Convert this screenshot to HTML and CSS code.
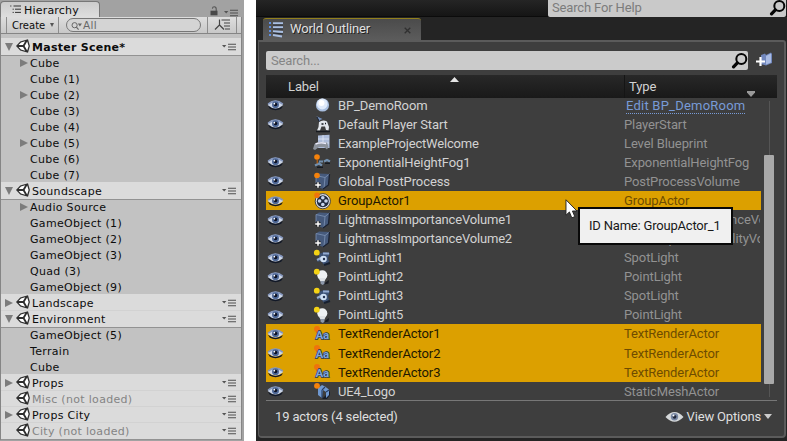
FILE: index.html
```html
<!DOCTYPE html>
<html lang="en">
<head>
<meta charset="utf-8">
<title>Scene hierarchy and world outliner</title>
<link rel="stylesheet" href="styles.css">
</head>
<body>
<svg class="defs" aria-hidden="true">
  <symbol id="unity" viewBox="0 0 14 14"><path d="M0 7 4.2 2.4 12 .2 13.9 7 12 13.8 4.2 11.6Z" fill="#2e2e2e"/><path d="M5 3.6 9.2 2.3 7 6.1H2.6ZM2.6 7.9H7L9.2 11.7 5 10.4ZM8.6 7 11.2 2.6 12.6 7 11.2 11.4Z" fill="#fff"/></symbol>
  <symbol id="menu" viewBox="0 0 14 8"><path d="M0 2H4.4L2.2 4.6Z" fill="#555"/><path d="M6 1.2h8M6 4h8M6 6.8h8" stroke="#505050" stroke-width="1.1"/></symbol>
  <symbol id="eye" viewBox="0 0 18 12"><path d="M1 6.8Q8 12.6 17 7.4L15 10Q9 13 3 10Z" fill="#111827"/><path d="M.7 6Q8.5-2.8 17.2 6 9 13.2.7 6Z" fill="#ccd6e8"/><path d="M1.2 5Q8.8-1.2 16.8 5" fill="none" stroke="#8496bd" stroke-width="1.8"/><circle cx="9" cy="5.8" r="3.7" fill="#4d6796"/><circle cx="9" cy="5.5" r="1.9" fill="#0b1022"/><circle cx="7.8" cy="4.6" r=".9" fill="#fff"/></symbol>
  <symbol id="glass" viewBox="0 0 16 16"><circle cx="9.7" cy="6.6" r="4.7" fill="none" stroke="#050505" stroke-width="1.9"/><path d="M6 10.2 2.4 14" stroke="#050505" stroke-width="3" stroke-linecap="round"/></symbol>
  <symbol id="sphere" viewBox="0 0 18 18"><circle cx="9.5" cy="9" r="6.6" fill="#a9bfdf"/><circle cx="9.2" cy="8" r="5.4" fill="#dfeafa"/><circle cx="8.5" cy="7" r="3" fill="#fff"/></symbol>
  <symbol id="player" viewBox="0 0 18 18"><path d="M3.5 1.2 9.5 4 7 5 6.6 7Z" fill="#7490bd"/><path d="M4 2 7 8" stroke="#161d2b"/><path d="M6 7Q10 4.2 14 6.5L16 12 15.5 15.5 13 15 12 11.5 8.5 11.5 7 15.5 4 15.5 5.5 12Z" fill="#e1e5ea"/><path d="M3 16.5h14M8.5 9h2M12 8.5h1" stroke="#16191f" stroke-width="1.5"/></symbol>
  <symbol id="level" viewBox="0 0 18 18"><path d="M5 1.5 16.5.7V14H5Z" fill="#aebddb"/><path d="M5 5h11M5 9h11M10 1v12" stroke="#e6edf8" stroke-width=".7"/><path d="M1.5 10Q5 7 9 8.5L14 8.5 15.5 13 14 15.5 11 13H6L2 16 0 15Z" fill="#8d939d"/><path d="M2.5 10.2Q7 8 13 9.5" stroke="#eef" fill="none" stroke-width="1.4"/></symbol>
  <symbol id="fog" viewBox="0 0 18 18"><path d="M2 12.5 6 10.5 9 12.5M6 8.5h4M11 8.5 14 7 17 8.5" stroke="#718fae" stroke-width="2.2" fill="none"/><path d="M4 14.3h6M12 10.3h5" stroke="#161b22" stroke-width="1.4"/><circle cx="4" cy="4" r="2.8" fill="#f5820b"/><path d="M4.2 6.5v4" stroke="#d66a09"/></symbol>
  <symbol id="cube" viewBox="0 0 18 18"><path d="M3 3.5 6 1.5 16.5 2 15.5 13 10 17 3 14Z" fill="#465a7c"/><path d="M3 3.5 12 5.5 16.5 2M12 5.5 11 16M3 3.5V12" fill="none" stroke="#7e93b5" stroke-width=".8"/><path d="M16.5 2 15.5 13 10 17" fill="none" stroke="#1b2232" stroke-width="1.3"/><path d="M5 10v6M2 13h6" stroke="#222" stroke-width="3"/><path d="M5 10.2v5.6M2.2 13h5.6" stroke="#fff" stroke-width="1.5"/></symbol>
  <symbol id="post" viewBox="0 0 18 18"><use href="#cube"/><circle cx="4" cy="3.5" r="2.8" fill="#f5820b"/></symbol>
  <symbol id="group" viewBox="0 0 18 18"><circle cx="9.8" cy="9.2" r="7.6" fill="#e2e5ea" stroke="#33363d" stroke-width=".9"/><circle cx="9.8" cy="9.2" r="6" fill="#202a3e"/><g fill="#c8d6ef"><circle cx="9.8" cy="5.8" r="1.8"/><circle cx="6.6" cy="9" r="1.8"/><circle cx="13" cy="9" r="1.8"/><circle cx="9.8" cy="12.5" r="1.8"/></g><circle cx="4" cy="3.2" r="2.8" fill="#ef740b"/></symbol>
  <symbol id="spot" viewBox="0 0 18 18"><path d="M6 5 11 3 17 4 15 9 16 13 11 16 8 12 4 13 6 10Z" fill="#3c5276"/><path d="M10 4.5 16 4.5M4 11 8 9" stroke="#93aacf" stroke-width="2"/><circle cx="10.5" cy="10" r="3.3" fill="#cfe0f4"/><circle cx="11" cy="10" r="1.2" fill="#233250"/><path d="M11 16 17 14" stroke="#17202f" stroke-width="2"/><circle cx="3.8" cy="3.7" r="2.9" fill="#f5d315"/></symbol>
  <symbol id="bulb" viewBox="0 0 18 18"><path d="M9 17 16 12 15.5 15.5Z" fill="#181b22"/><circle cx="9.3" cy="7.2" r="5" fill="#eef1f3"/><path d="M5.6 10h7.4L11.5 13.5h-4Z" fill="#dfe3e7"/><path d="M7.6 13h3.8v3L9.7 17 7.6 15.8Z" fill="#8d98aa"/><circle cx="3.8" cy="3.7" r="2.9" fill="#f5d315"/></symbol>
  <symbol id="text" viewBox="0 0 18 18"><circle cx="4" cy="4" r="3" fill="#ef740b"/><path d="M4 6.5v2" stroke="#b85a08"/><text x="2.6" y="14.2" class="aa">Aa</text></symbol>
  <symbol id="mesh" viewBox="0 0 18 18"><path d="M9 17 14 17 17 13V9Z" fill="#171d29"/><path d="M5 6 9 3 12 4.5 16 7.5V13L13 16V10L10 8 9 16 5 13Z" fill="#6f98d0"/><path d="M9 8 12 5M9 8V16M13 10 16 8" stroke="#263d63" stroke-width="1.1"/><circle cx="4" cy="3.8" r="2.9" fill="#f5820b"/></symbol>
</svg>
<div class="desktop">
  <section class="hierarchy">
    <div class="h-tabs">
      <div class="h-tab"><svg width="11" height="9" viewBox="0 0 11 9"><path d="M3.5 1H11M5 4.2h6M5 7.4h6" stroke="#333"/><path d="M0 1h1.5M2.5 4.2H4M2.5 7.4H4" stroke="#555"/></svg>Hierarchy</div>
      <div class="h-tools"><svg width="8" height="10" viewBox="0 0 8 10"><path d="M2.4 2.6Q2.6.8 4.2.8 6.2.8 6.2 3V5" fill="none" stroke="#555" stroke-width="1.1"/><path d="M.5 4.7h7V9.3h-7Z" fill="#484848"/></svg><svg width="14" height="8"><use href="#menu"/></svg></div>
    </div>
    <div class="h-bar">
      <div class="create">Create<i></i></div>
      <div class="h-search"><svg width="12" height="10" viewBox="0 0 12 10"><circle cx="3.6" cy="4.2" r="2.6" fill="none" stroke="#666"/><path d="M5.4 6.2 7.6 8.7" stroke="#666" stroke-width="1.2"/><path d="M6.8 2.5H11L8.9 5.4Z" fill="#666"/></svg>All</div>
      <div class="sort"><svg width="17" height="12" viewBox="0 0 17 12"><path d="M5.5.5V6L1 10.5M5.5 6 10 10.5M7.5 1H16M10 4h6M10 7h6M11 10h5" stroke="#444" stroke-width="1.2" fill="none"/></svg></div>
    </div>
    <div class="tree">
      <div class="scene main"><i class="dn"></i><svg class="u"><use href="#unity"/></svg><span>Master Scene*</span><svg class="m"><use href="#menu"/></svg></div>
      <div class="node"><i class="rt"></i>Cube</div>
      <div class="node"><i></i>Cube (1)</div>
      <div class="node"><i class="rt"></i>Cube (2)</div>
      <div class="node"><i></i>Cube (3)</div>
      <div class="node"><i></i>Cube (4)</div>
      <div class="node"><i class="rt"></i>Cube (5)</div>
      <div class="node"><i></i>Cube (6)</div>
      <div class="node"><i></i>Cube (7)</div>
      <div class="scene"><i class="dn"></i><svg class="u"><use href="#unity"/></svg><span>Soundscape</span><svg class="m"><use href="#menu"/></svg></div>
      <div class="node"><i class="rt"></i>Audio Source</div>
      <div class="node"><i></i>GameObject (1)</div>
      <div class="node"><i></i>GameObject (2)</div>
      <div class="node"><i></i>GameObject (3)</div>
      <div class="node"><i></i>Quad (3)</div>
      <div class="node"><i></i>GameObject (9)</div>
      <div class="scene shut"><i class="rt"></i><svg class="u"><use href="#unity"/></svg><span>Landscape</span><svg class="m"><use href="#menu"/></svg></div>
      <div class="scene"><i class="dn"></i><svg class="u"><use href="#unity"/></svg><span>Environment</span><svg class="m"><use href="#menu"/></svg></div>
      <div class="node"><i></i>GameObject (5)</div>
      <div class="node"><i></i>Terrain</div>
      <div class="node"><i></i>Cube</div>
      <div class="scene shut"><i class="rt"></i><svg class="u"><use href="#unity"/></svg><span>Props</span><svg class="m"><use href="#menu"/></svg></div>
      <div class="scene shut off"><i></i><svg class="u"><use href="#unity"/></svg><span>Misc (not loaded)</span><svg class="m"><use href="#menu"/></svg></div>
      <div class="scene shut"><i class="rt"></i><svg class="u"><use href="#unity"/></svg><span>Props City</span><svg class="m"><use href="#menu"/></svg></div>
      <div class="scene off"><i></i><svg class="u"><use href="#unity"/></svg><span>City (not loaded)</span><svg class="m"><use href="#menu"/></svg></div>
    </div>
  </section>

  <section class="editor">
    <div class="help-bar"><div class="help"><span>Search For Help</span><svg width="17" height="17"><use href="#glass"/></svg></div></div>
    <div class="o-tabs"><div class="o-tab"><svg width="16" height="17" viewBox="0 0 16 17"><path d="M1 2h2M1 6h2M1 10h2M1 14h2" stroke="#5f8fe0" stroke-width="2"/><path d="M5 2.2H15M5 6.2H15M5 10.2 15 11M5 14 14 15.5" stroke="#a9bfe2" stroke-width="2"/><path d="M5 4H15M5 8H15M5 12 15 13" stroke="#262b35" stroke-width="1"/></svg><span>World Outliner</span><svg class="x" width="7" height="7" viewBox="0 0 7 7"><path d="M.7.7 6.3 6.3M6.3.7.7 6.3" stroke="#303030" stroke-width="1.3"/></svg></div></div>
    <div class="panel">
      <div class="find">
        <div class="field"><span>Search...</span><svg width="17" height="17"><use href="#glass"/></svg></div>
        <svg width="18" height="17" viewBox="0 0 18 17"><path d="M6 4 10 2.5 11 4 16 1.5 17 3V12L11 14.5 6 13Z" fill="#7187bd"/><path d="M11 5 16 2.5V11.5L11 13.5Z" fill="#a9bbe3"/><path d="M5.5 6v9M1 10.5h9" stroke="#fff" stroke-width="2.2"/></svg>
      </div>
      <div class="cols"><span class="c-label">Label</span><i class="up"></i><span class="c-type">Type</span><i class="filter"></i></div>
      <div class="list">
        <div class="rows">
          <div class="row"><svg class="e"><use href="#eye"/></svg><svg class="k"><use href="#sphere"/></svg><b>BP_DemoRoom</b><span><a>Edit BP_DemoRoom</a></span></div>
          <div class="row"><svg class="e"><use href="#eye"/></svg><svg class="k"><use href="#player"/></svg><b>Default Player Start</b><span>PlayerStart</span></div>
          <div class="row"><svg class="e"></svg><svg class="k"><use href="#level"/></svg><b class="tight">ExampleProjectWelcome</b><span>Level Blueprint</span></div>
          <div class="row"><svg class="e"><use href="#eye"/></svg><svg class="k"><use href="#fog"/></svg><b>ExponentialHeightFog1</b><span>ExponentialHeightFog</span></div>
          <div class="row"><svg class="e"><use href="#eye"/></svg><svg class="k"><use href="#post"/></svg><b>Global PostProcess</b><span>PostProcessVolume</span></div>
          <div class="row sel"><svg class="e"><use href="#eye"/></svg><svg class="k"><use href="#group"/></svg><b>GroupActor1</b><span>GroupActor</span></div>
          <div class="row"><svg class="e"><use href="#eye"/></svg><svg class="k"><use href="#cube"/></svg><b class="tight">LightmassImportanceVolume1</b><span class="imp">LightmassImportanceVolume</span></div>
          <div class="row"><svg class="e"><use href="#eye"/></svg><svg class="k"><use href="#cube"/></svg><b class="tight">LightmassImportanceVolume2</b><span class="vis">PrecomputedVisibilityVolume</span></div>
          <div class="row"><svg class="e"><use href="#eye"/></svg><svg class="k"><use href="#spot"/></svg><b>PointLight1</b><span>SpotLight</span></div>
          <div class="row"><svg class="e"><use href="#eye"/></svg><svg class="k"><use href="#bulb"/></svg><b>PointLight2</b><span>PointLight</span></div>
          <div class="row"><svg class="e"><use href="#eye"/></svg><svg class="k"><use href="#spot"/></svg><b>PointLight3</b><span>SpotLight</span></div>
          <div class="row"><svg class="e"><use href="#eye"/></svg><svg class="k"><use href="#bulb"/></svg><b>PointLight5</b><span>PointLight</span></div>
          <div class="row sel"><svg class="e"><use href="#eye"/></svg><svg class="k"><use href="#text"/></svg><b>TextRenderActor1</b><span>TextRenderActor</span></div>
          <div class="row sel"><svg class="e"><use href="#eye"/></svg><svg class="k"><use href="#text"/></svg><b>TextRenderActor2</b><span>TextRenderActor</span></div>
          <div class="row sel"><svg class="e"><use href="#eye"/></svg><svg class="k"><use href="#text"/></svg><b>TextRenderActor3</b><span>TextRenderActor</span></div>
          <div class="row"><svg class="e"><use href="#eye"/></svg><svg class="k"><use href="#mesh"/></svg><b>UE4_Logo</b><span>StaticMeshActor</span></div>
        </div>
        <div class="scroll"><div class="thumb"></div></div>
      </div>
      <div class="foot"><span>19 actors (4 selected)</span><div class="view"><svg width="19" height="12" viewBox="0 0 19 12"><path d="M.5 6Q9.5-4 18.5 6 9.5 15.5.5 6Z" fill="#d5d8da"/><circle cx="9.5" cy="5.8" r="3.7" fill="#7887a3"/><circle cx="9.5" cy="5.8" r="1.9" fill="#20283b"/><circle cx="8.5" cy="4.5" r="1" fill="#fff"/></svg><span>View Options</span><i></i></div></div>
    </div>
    <div class="tip">ID Name: GroupActor_1</div>
    <svg class="cursor" viewBox="0 0 13 21"><path d="M.7.8V17L4.3 13.6 6.8 19.8 10 18.5 7.5 12.6H12.2Z" fill="#fff" stroke="#222" stroke-width="1"/></svg>
  </section>
</div>
</body>
</html>
```

FILE: styles.css
```css
* { box-sizing: border-box; }
body { margin: 0; background: #fff; overflow: hidden; }
svg { display: block; flex: none; }
i { display: block; flex: none; }
.defs { position: absolute; width: 0; height: 0; }
.desktop { display: flex; justify-content: space-between; width: 787px; height: 441px; }

/* Hierarchy panel */
.hierarchy { width: 244px; height: 441px; background: #a2a2a2; font: 11px/16px "DejaVu Sans", sans-serif; letter-spacing: .31px; color: #0c0c0c; }
.h-tabs { display: flex; justify-content: space-between; height: 17px; padding-top: 1px; }
.h-tab { display: flex; gap: 3px; width: 100px; height: 16px; padding: 3px 0 0 9px; border: solid #777; border-width: 1px 1px 0; border-radius: 4px 4px 0 0; background: linear-gradient(#ccc, #dedede); line-height: 12px; white-space: nowrap; letter-spacing: .2px; }
.h-tools { display: flex; gap: 6px; padding: 5px 6px 0 0; }
.h-tools svg + svg { margin-top: 3px; }
.h-bar { display: flex; width: 242px; height: 17px; background: linear-gradient(#dedede, #c8c8c8); border: solid #858585; border-width: 0 1px 1px; }
.create { display: flex; justify-content: space-between; width: 53px; margin-left: 5px; padding: 0 4px 0 5px; border: solid #8d8d8d; border-width: 0 1px; font-size: 10px; line-height: 17px; letter-spacing: 0; }
.create i { margin-top: 6px; border: solid transparent; border-width: 4px 2.5px 0; border-top-color: #555; height: 0; }
.h-search { display: flex; width: 135px; height: 14px; margin: 1px 6px 0 7px; padding: 1px 0 0 4px; border: 1px solid #777; border-radius: 7px; background: #d4d4d4; color: #686868; font-size: 10.5px; line-height: 10px; }
.h-search svg { margin-top: 1px; }
.sort { width: 30px; padding: 2px 0 0 6px; border: solid #8d8d8d; border-width: 0 1px; }
.tree { width: 242px; height: 406px; padding-top: 5px; margin-bottom: 1px; background: #c2c2c2; border: solid #858585; border-width: 0 1px 1px; }
.scene, .node { display: flex; align-items: center; height: 16px; padding-top: 2px; white-space: nowrap; }
.scene { padding-left: 4px; padding-right: 5px; background: #dbdbdb; box-shadow: 0 -1px #dbdbdb, 0 1px #929292; }
.scene.shut { box-shadow: 0 -1px #dbdbdb, inset 0 -1px #d2d2d2; }
.scene + .scene { box-shadow: 0 1px #929292; }
.scene.shut + .shut { box-shadow: inset 0 -1px #d2d2d2; }
.scene i { width: 8px; margin-right: 3px; }
.scene i, .node i, .scene .m { margin-top: -2px; }
.scene .u { width: 14px; height: 14px; margin: -4px 2px 0 0; }
.scene span { flex: 1; }
.scene .m { width: 14px; height: 8px; }
.main span { font-weight: bold; letter-spacing: .27px; }
.off { color: #848484; }
.node { padding-left: 19px; }
.node i { width: 8px; margin-right: 2px; }
i.rt { height: 8px; background: #7c7c7c; clip-path: polygon(0 0, 100% 50%, 0 100%); }
i.dn { height: 8px; background: #7c7c7c; clip-path: polygon(0 0, 100% 0, 50% 100%); }

/* World outliner */
.editor { position: relative; width: 531px; height: 441px; background: #242424; font: 13px/19px Roboto, sans-serif; letter-spacing: -.1px; color: #d2d2d2; }
.help-bar { display: flex; justify-content: flex-end; height: 17px; padding-right: 1px; background: linear-gradient(#252525, #151515); border-bottom: 1px solid #0b0b0b; }
.help { display: flex; justify-content: space-between; width: 238px; height: 17px; padding-left: 4px; background: #c9c9c9; color: #7c7c7c; line-height: 15px; border-radius: 0 0 2px 2px; letter-spacing: -.15px; }
.help svg { margin-top: -1px; }
.o-tabs { height: 23px; padding: 1px 0 0 7px; }
.o-tab { display: flex; width: 158px; height: 22px; padding: 2px 10px 0 5px; background: linear-gradient(#4b4b4b, #5c5c5c); border-top: 1px solid #92801c; border-radius: 3px 3px 0 0; line-height: 15px; text-shadow: 1px 1px #222; color: #e0e0e0; letter-spacing: -.15px; }
.o-tab span { flex: 1; margin-left: 6px; }
.o-tab .x { margin-top: 6px; }
.panel { width: 528px; height: 398px; margin-left: 2px; padding: 9px 8px 0 7px; background: #3e3e3e; border: 2px solid #5b5b5b; border-left-width: 1px; border-radius: 0 3px 4px 4px; }
.find { display: flex; gap: 7px; height: 24px; }
.field { display: flex; justify-content: space-between; width: 482px; height: 19px; padding: 0 0 0 5px; background: #cbcbcb; border-radius: 2px; color: #858585; letter-spacing: -.15px; }
.field svg { margin-top: 1px; }
.cols { display: flex; height: 23px; width: 511px; padding-left: 22px; background: linear-gradient(#282828, #191919); line-height: 23px; letter-spacing: -.1px; }
.c-label { width: 162px; }
.up { width: 9px; height: 5px; margin-top: 2px; background: #e4e4e4; clip-path: polygon(50% 0, 100% 100%, 0 100%); }
.c-type { width: 123px; margin-left: 165px; padding-left: 4px; border-left: 1px solid #151515; }
.filter { width: 8px; height: 6px; margin: 16px 0 0; background: #999; clip-path: polygon(0 0, 100% 0, 100% 25%, 50% 100%, 0 25%); }
.list { display: flex; width: 511px; height: 303px; overflow: hidden; border-bottom: 1px solid #777; }
.rows { width: 495px; margin-top: -2.3px; }
.row { display: flex; align-items: center; height: 19.07px; width: 495px; overflow: hidden; white-space: nowrap; }
.row .e { width: 17px; height: 12px; margin: 0 29px 0 1px; }
.row .k { width: 18px; height: 18px; margin-right: 7px; }
.row b { width: 286px; font-weight: normal; }
.row .tight { letter-spacing: -.18px; }
.row span { width: 136px; color: #929292; overflow: hidden; }
.row a { color: #789bd7; margin-left: 2px; border-bottom: 1px dotted #789bd7; line-height: 14px; display: inline-block; letter-spacing: .22px; }
.row .imp { letter-spacing: -.03px; }
.row .vis { letter-spacing: -.08px; }
.row.sel { background: #dca000; color: #211800; }
.row.sel span { color: #6e4c00; }
.aa { font: bold 11.5px Roboto, sans-serif; letter-spacing: -.2px; fill: #7fa5da; stroke: #24364f; stroke-width: 1.4px; paint-order: stroke; }
.scroll { width: 11px; height: 296px; margin: 3px 0 0 3px; background: linear-gradient(90deg, transparent 5px, #555 5px, #555 6px, transparent 6px); }
.thumb { width: 10px; height: 229px; margin: 0; background: #a9a9a9; transform: translateY(54px); border-radius: 1px; }
.foot { display: flex; justify-content: space-between; padding: 6px 4px 0 9px; color: #dedede; letter-spacing: -.15px; }
.view { display: flex; align-items: center; }
.view span { margin: 0 3px; }
.view i { border: solid transparent; border-width: 5px 4.5px 0; border-top-color: #ccc; }
.tip { position: absolute; left: 322px; top: 207px; width: 155px; height: 38px; border: 2px solid #090909; background: #f0f0f0; color: #181818; padding-left: 9px; line-height: 34px; letter-spacing: -.2px; white-space: nowrap; }
.cursor { position: absolute; left: 309px; top: 199px; width: 13px; height: 20px; }
```
